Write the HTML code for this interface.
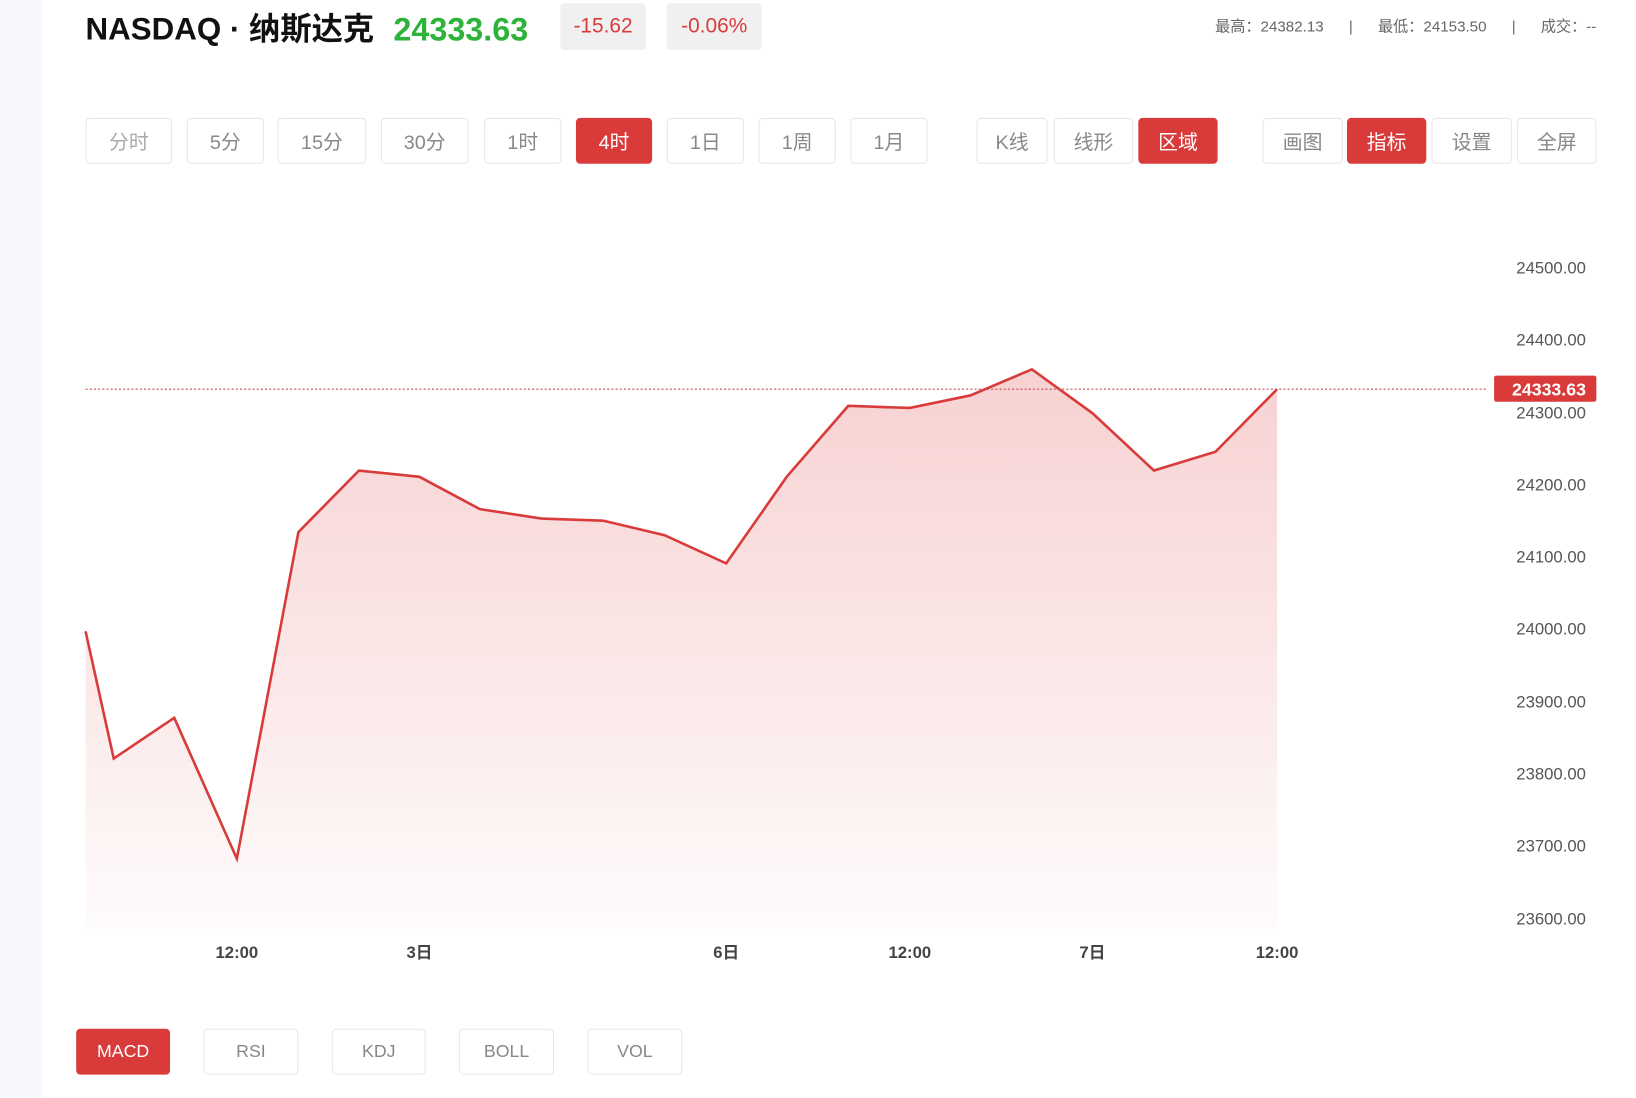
<!DOCTYPE html>
<html><head><meta charset="utf-8">
<style>
html,body{margin:0;padding:0;background:#fff;overflow:hidden;width:1636px;height:1098px}
#w{position:absolute;left:0;top:0;width:1568px;height:1052px;transform:scale(1.04337);transform-origin:0 0;font-family:"Liberation Sans","Noto Sans CJK SC",sans-serif}
.side{position:absolute;left:0;top:0;width:40px;height:1052px;background:#f5f7fa}
.t{position:absolute;white-space:nowrap}
.b{position:absolute;box-sizing:border-box;border:1px solid #e6e6e6;border-radius:4px;background:#fff;color:#888;font-size:19px;display:flex;align-items:center;justify-content:center}
.b.on{background:#d93b3b;border-color:#d93b3b;color:#fff}
.chip{position:absolute;top:3px;height:45px;background:#f0f0f0;border-radius:4px;color:#d93b3b;font-size:20px;display:flex;align-items:center;justify-content:center}
.yl{position:absolute;right:48px;font-size:16px;color:#555;line-height:20px}
.xl{position:absolute;top:904px;font-size:16px;color:#444;font-weight:bold;transform:translateX(-50%);line-height:20px}
</style></head><body><div id="w">
<div class="side"></div>
<div class="t" style="left:82px;top:11px;font-size:30px;line-height:36px;font-weight:bold;color:#111">NASDAQ · 纳斯达克</div>
<div class="t" style="left:377px;top:11px;font-size:31px;line-height:36px;font-weight:bold;color:#2db33a">24333.63</div>
<div class="chip" style="left:537px;width:82px">-15.62</div>
<div class="chip" style="left:639px;width:91px">-0.06%</div>
<div class="t" style="right:38px;top:16px;font-size:14.5px;line-height:20px;color:#666">最高：24382.13 &nbsp;&nbsp;&nbsp;&nbsp;&nbsp;|&nbsp;&nbsp;&nbsp;&nbsp;&nbsp; 最低：24153.50 &nbsp;&nbsp;&nbsp;&nbsp;&nbsp;|&nbsp;&nbsp;&nbsp;&nbsp;&nbsp; 成交：--</div>

<div class="b" style="left:82px;top:113px;width:83px;height:44px;color:#aaa">分时</div>
<div class="b" style="left:179px;top:113px;width:74px;height:44px">5分</div>
<div class="b" style="left:266px;top:113px;width:85px;height:44px">15分</div>
<div class="b" style="left:365px;top:113px;width:84px;height:44px">30分</div>
<div class="b" style="left:464px;top:113px;width:74px;height:44px">1时</div>
<div class="b on" style="left:552px;top:113px;width:73px;height:44px">4时</div>
<div class="b" style="left:639px;top:113px;width:74px;height:44px">1日</div>
<div class="b" style="left:727px;top:113px;width:74px;height:44px">1周</div>
<div class="b" style="left:815px;top:113px;width:74px;height:44px">1月</div>
<div class="b" style="left:936px;top:113px;width:68px;height:44px">K线</div>
<div class="b" style="left:1010px;top:113px;width:76px;height:44px">线形</div>
<div class="b on" style="left:1091px;top:113px;width:76px;height:44px">区域</div>
<div class="b" style="left:1210px;top:113px;width:77px;height:44px">画图</div>
<div class="b on" style="left:1291px;top:113px;width:76px;height:44px">指标</div>
<div class="b" style="left:1372px;top:113px;width:77px;height:44px">设置</div>
<div class="b" style="left:1454px;top:113px;width:76px;height:44px">全屏</div>

<svg style="position:absolute;left:0;top:0" width="1568" height="1052">
<defs><linearGradient id="g" x1="0" y1="354" x2="0" y2="890" gradientUnits="userSpaceOnUse">
<stop offset="0" stop-color="#e04848" stop-opacity="0.25"/><stop offset="1" stop-color="#e04848" stop-opacity="0.02"/></linearGradient></defs>
<path d="M82,605 L109,727 L167,688 L227,823 L286,510 L344,451 L402,457 L460,488 L519,497 L578,499 L637,513 L696,540 L754,457 L813,389 L872,391 L930,379 L989,354 L1047,396 L1106,451 L1165,433 L1224,373 L1224,890 L82,890 Z" fill="url(#g)"/>
<path d="M82,605 L109,727 L167,688 L227,823 L286,510 L344,451 L402,457 L460,488 L519,497 L578,499 L637,513 L696,540 L754,457 L813,389 L872,391 L930,379 L989,354 L1047,396 L1106,451 L1165,433 L1224,373" fill="none" stroke="#d93b3b" stroke-width="2.5"/>
<line x1="82" y1="373" x2="1426" y2="373" stroke="#c0504d" stroke-width="1" stroke-dasharray="2,2"/>
<rect x="1432" y="360" width="98" height="25" rx="2" fill="#d93b3b"/>
<text x="1520" y="379" text-anchor="end" font-family="Liberation Sans,sans-serif" font-size="17" font-weight="bold" fill="#fff">24333.63</text>
</svg>

<div class="yl" style="top:248px">24500.00</div>
<div class="yl" style="top:317px">24400.00</div>
<div class="yl" style="top:387px">24300.00</div>
<div class="yl" style="top:456px">24200.00</div>
<div class="yl" style="top:525px">24100.00</div>
<div class="yl" style="top:594px">24000.00</div>
<div class="yl" style="top:664px">23900.00</div>
<div class="yl" style="top:733px">23800.00</div>
<div class="yl" style="top:802px">23700.00</div>
<div class="yl" style="top:872px">23600.00</div>

<div class="xl" style="left:227px">12:00</div>
<div class="xl" style="left:402px">3日</div>
<div class="xl" style="left:696px">6日</div>
<div class="xl" style="left:872px">12:00</div>
<div class="xl" style="left:1047px">7日</div>
<div class="xl" style="left:1224px">12:00</div>

<div class="b on" style="left:73px;top:986px;width:90px;height:44px;font-size:17px">MACD</div>
<div class="b" style="left:195px;top:986px;width:91px;height:44px;font-size:17px">RSI</div>
<div class="b" style="left:318px;top:986px;width:90px;height:44px;font-size:17px">KDJ</div>
<div class="b" style="left:440px;top:986px;width:91px;height:44px;font-size:17px">BOLL</div>
<div class="b" style="left:563px;top:986px;width:91px;height:44px;font-size:17px">VOL</div>
</div></body></html>
